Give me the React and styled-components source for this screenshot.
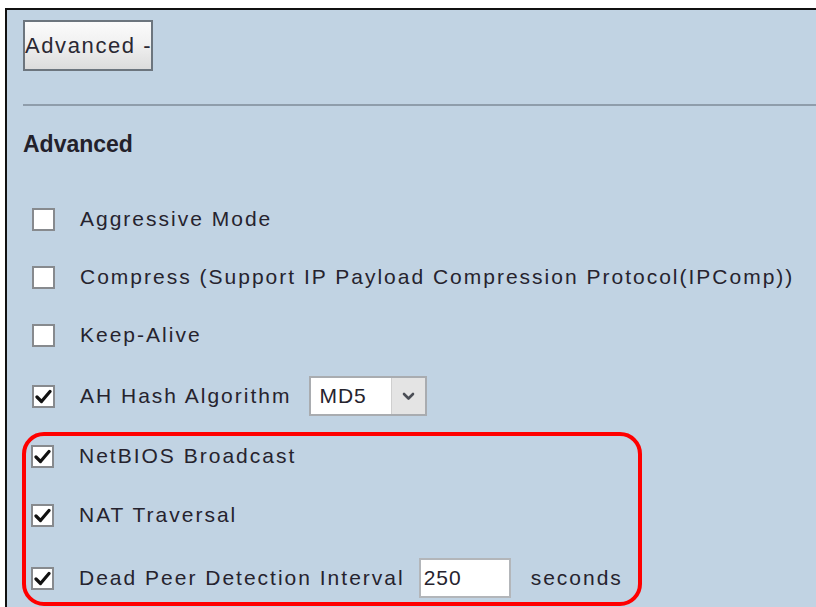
import React from "react";
import styled, { createGlobalStyle } from "styled-components";

const Global = createGlobalStyle`
  html, body { margin: 0; padding: 0; background: #ffffff; }
  body { font-family: "Liberation Sans", Arial, sans-serif; color: #26232e; }
  #root { height: 607px; overflow: hidden; }
`;

const Frame = styled.div`
  margin: 8px 0 0 5px;
  height: 599px;
  box-sizing: border-box;
  border-top: 2px solid #111;
  border-left: 2px solid #111;
  background: #c1d3e3;
  padding: 10px 0 0 16px;
  display: flex;
  flex-direction: column;
`;

const ToggleButton = styled.button`
  align-self: flex-start;
  width: 130px;
  height: 51px;
  box-sizing: border-box;
  border: 2px solid #6c757e;
  background: linear-gradient(#fbfbfb 0%, #f1f1f1 45%, #dcdcdc 100%);
  font-family: "Liberation Sans", Arial, sans-serif;
  font-size: 22px;
  letter-spacing: 1.6px;
  color: #2a2833;
  padding: 0;
  text-align: left;
  white-space: nowrap;
`;

const Divider = styled.hr`
  margin: 33px 0 0 0;
  border: 0;
  height: 2px;
  background: #8f9dab;
`;

const Heading = styled.h3`
  margin: 25px 0 0 0;
  font-size: 23px;
  font-weight: bold;
  line-height: 26px;
  color: #23212b;
`;

const List = styled.div`
  margin-top: 33px;
  display: flex;
  flex-direction: column;
`;

const Row = styled.div`
  display: flex;
  align-items: center;
  height: ${(p) => p.$h || 58}px;
  margin-top: ${(p) => p.$mt || 0}px;
  padding-left: ${(p) => p.$pad ?? 9}px;
  font-size: 21px;
  letter-spacing: 2px;
  white-space: nowrap;
`;

const Box = styled.span`
  flex: none;
  width: 23px;
  height: 23px;
  box-sizing: border-box;
  border: 2px solid #878a8e;
  background: #ffffff;
  display: flex;
  align-items: center;
  justify-content: center;
  margin-right: 25px;
`;

const Label = styled.span`
  margin-right: ${(p) => p.$gap || 0}px;
`;

const Select = styled.div`
  display: flex;
  height: 40px;
  box-sizing: border-box;
  border: 2px solid #a9acb0;
  background: #ffffff;
`;

const SelectValue = styled.span`
  width: 80px;
  padding-left: 8px;
  box-sizing: border-box;
  display: flex;
  align-items: center;
  letter-spacing: 1px;
`;

const SelectArrow = styled.span`
  width: 33px;
  background: #e4e4e4;
  border-left: 1px solid #cfcfcf;
  display: flex;
  align-items: center;
  justify-content: center;
`;

const Highlight = styled.div`
  margin: 4px 0 0 -1px;
  width: 620px;
  box-sizing: border-box;
  border: 4px solid #ff0000;
  border-radius: 22px;
  padding: 0 0 4px 0;
  display: flex;
  flex-direction: column;
`;

const NumberField = styled.div`
  width: 92px;
  height: 40px;
  box-sizing: border-box;
  border: 2px solid #b3b6ba;
  background: #ffffff;
  padding-left: 3px;
  display: flex;
  align-items: center;
  letter-spacing: 1px;
  margin-right: 20px;
`;

const Check = () => (
  <svg width="17" height="15" viewBox="0 0 17 15">
    <path d="M2 8 L6.5 12.5 L15 2.5" fill="none" stroke="#111" strokeWidth="3.2" strokeLinecap="round" strokeLinejoin="round" />
  </svg>
);

const Chevron = () => (
  <svg width="13" height="9" viewBox="0 0 13 9">
    <path d="M2 2 L6.5 6.5 L11 2" fill="none" stroke="#4a4d55" strokeWidth="2.6" strokeLinecap="round" strokeLinejoin="round" />
  </svg>
);

const CheckBox = ({ on }) => <Box>{on && <Check />}</Box>;

export default function App() {
  return (
    <>
      <Global />
      <Frame>
        <ToggleButton>Advanced -</ToggleButton>
        <Divider />
        <Heading>Advanced</Heading>
        <List>
          <Row>
            <CheckBox />
            <Label>Aggressive Mode</Label>
          </Row>
          <Row>
            <CheckBox />
            <Label>Compress (Support IP Payload Compression Protocol(IPComp))</Label>
          </Row>
          <Row>
            <CheckBox />
            <Label>Keep-Alive</Label>
          </Row>
          <Row $h={64}>
            <CheckBox on />
            <Label $gap={18}>AH Hash Algorithm</Label>
            <Select>
              <SelectValue>MD5</SelectValue>
              <SelectArrow>
                <Chevron />
              </SelectArrow>
            </Select>
          </Row>
          <Highlight>
            <Row $h={40} $pad={5}>
              <CheckBox on />
              <Label>NetBIOS Broadcast</Label>
            </Row>
            <Row $h={40} $pad={5} $mt={19}>
              <CheckBox on />
              <Label>NAT Traversal</Label>
            </Row>
            <Row $h={40} $pad={5} $mt={23}>
              <CheckBox on />
              <Label $gap={14}>Dead Peer Detection Interval</Label>
              <NumberField>250</NumberField>
              <Label>seconds</Label>
            </Row>
          </Highlight>
        </List>
      </Frame>
    </>
  );
}
